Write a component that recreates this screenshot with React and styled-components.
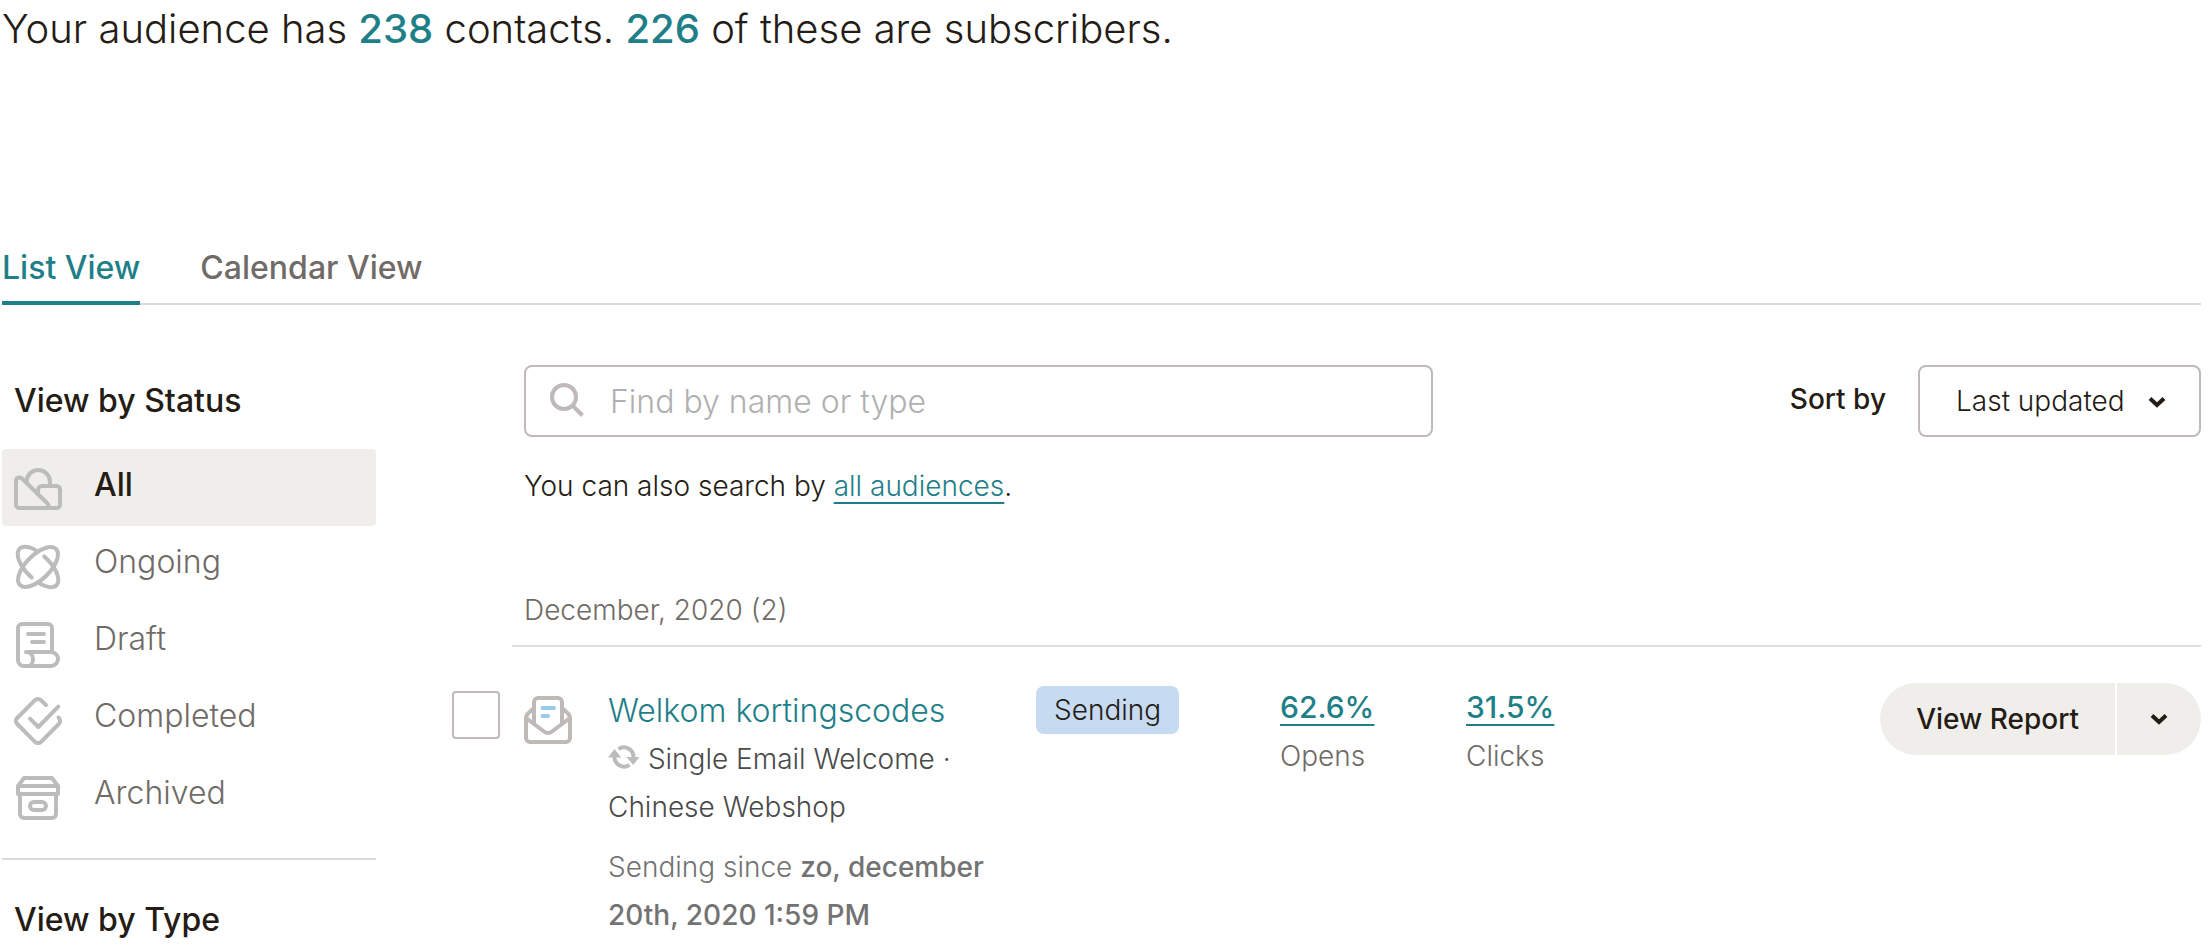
import React from 'react'
import styled, { createGlobalStyle } from 'styled-components'

const statuses = [
  { label: 'All', icon: AllIcon, active: true },
  { label: 'Ongoing', icon: OngoingIcon },
  { label: 'Draft', icon: DraftIcon },
  { label: 'Completed', icon: CompletedIcon },
  { label: 'Archived', icon: ArchivedIcon },
]

const stats = [
  { value: '62.6%', label: 'Opens' },
  { value: '31.5%', label: 'Clicks' },
]

function App() {
  return (
    <Page>
      <GlobalStyle />
      <Summary>
        Your audience has <strong>238</strong> contacts. <strong>226</strong> of
        these are subscribers.
      </Summary>

      <Tabs>
        <Tab href="#list" $active>
          List View
        </Tab>
        <Tab href="#calendar">Calendar View</Tab>
      </Tabs>

      <Columns>
        <Sidebar>
          <SidebarTitle>View by Status</SidebarTitle>
          <StatusList>
            {statuses.map(({ label, icon: StatusIcon, active }) => (
              <li key={label}>
                <StatusLink href={`#${label.toLowerCase()}`} $active={active}>
                  <StatusIcon />
                  {label}
                </StatusLink>
              </li>
            ))}
          </StatusList>
          <Divider />
          <SidebarTitle>View by Type</SidebarTitle>
        </Sidebar>

        <Main>
          <Toolbar>
            <SearchBox>
              <SearchIcon />
              <SearchInput
                type="text"
                aria-label="Find by name or type"
                placeholder="Find by name or type"
              />
            </SearchBox>
            <Sort>
              <SortLabel htmlFor="sort">Sort by</SortLabel>
              <SelectBox>
                <Select id="sort" defaultValue="updated">
                  <option value="updated">Last updated</option>
                  <option value="name">Name</option>
                </Select>
                <Chevron />
              </SelectBox>
            </Sort>
          </Toolbar>
          <Hint>
            You can also search by <a href="#audiences">all audiences</a>.
          </Hint>

          <Month>December, 2020 (2)</Month>
          <Campaign>
            <Checkbox type="checkbox" aria-label="Select Welkom kortingscodes" />
            <MailIcon />
            <Info>
              <CampaignLink href="#campaign">Welkom kortingscodes</CampaignLink>
              <Kind>
                <SyncIcon /> Single Email Welcome · Chinese Webshop
              </Kind>
              <Since>
                Sending since <strong>zo, december 20th, 2020 1:59 PM</strong>
              </Since>
            </Info>
            <div>
              <Badge>Sending</Badge>
            </div>
            {stats.map((stat) => (
              <div key={stat.label}>
                <StatLink href="#report">{stat.value}</StatLink>
                <StatLabel>{stat.label}</StatLabel>
              </div>
            ))}
            <ButtonGroup>
              <ReportButton type="button">View Report</ReportButton>
              <MenuButton type="button" aria-label="More actions">
                <Chevron />
              </MenuButton>
            </ButtonGroup>
          </Campaign>
        </Main>
      </Columns>
    </Page>
  )
}

export default App

function AllIcon() {
  return (
    <Icon viewBox="0 0 48 48">
      <path d="M8 12.5C5.5 10.5 2 11.5 2 15v23.500a3.500 3.500 0 0 0 3.500 3.500h37a3.500 3.500 0 0 0 3.500-3.500v-15a3.500 3.500 0 0 0-3.500-3.500H28a4 4 0 0 0-4 4v4" />
      <path d="M8 12.5l25 24.500c1.500 1.500 2 3 1.500 5" />
      <path d="M12.500 16a11.750 12 0 0 1 23.500 0v4" />
    </Icon>
  )
}

function OngoingIcon() {
  return (
    <Icon viewBox="0 0 48 48">
      <ellipse cx="24" cy="24" rx="25.5" ry="12" transform="rotate(-45 24 24)" />
      <path d="M17.7 34.6A25.500 12 45 0 1 24 8.6" />
      <path d="M30.3 13.4A25.500 12 45 0 1 24 39.4" />
    </Icon>
  )
}

function DraftIcon() {
  return (
    <Icon viewBox="0 0 48 48">
      <path d="M38 31V8a4 4 0 0 0-4-4H8a4 4 0 0 0-4 4v32a6 6 0 0 0 6 6h27a7 7 0 0 0 0-14H12c4 0 7 3 7 7s-2 7-5 7" />
      <path d="M14 14h16M18 22h12" />
    </Icon>
  )
}

function CompletedIcon() {
  return (
    <Icon viewBox="0 0 48 48">
      <path d="M32 8l-5-4.8a4.200 4.200 0 0 0-6 0L3.200 21a4.200 4.200 0 0 0 0 6L21 44.800a4.200 4.200 0 0 0 6 0L44.800 27c1.800-1.800 1.800-4.500-.3-6.500" />
      <path d="M16 21.7l8.300 8.300 20-20.300" />
    </Icon>
  )
}

function ArchivedIcon() {
  return (
    <Icon viewBox="0 0 48 48">
      <path d="M4 12l6-8h28l6 8v8H4zM4 12h40" />
      <path d="M6 20v20a4 4 0 0 0 4 4h28a4 4 0 0 0 4-4V20" />
      <rect x="16" y="28" width="16" height="8" rx="4" />
    </Icon>
  )
}

function SearchIcon() {
  return (
    <SearchGlyph viewBox="0 0 34 34">
      <circle cx="14" cy="14" r="12" />
      <path d="M22.5 22.5l10 10" />
    </SearchGlyph>
  )
}

function MailIcon() {
  return (
    <MailGlyph viewBox="0 0 48 48">
      <path d="M10 27V6a4 4 0 0 1 4-4h20a4 4 0 0 1 4 4v21" />
      <path d="M10 12l-5 4.5a8 8 0 0 0-3 6V42a4 4 0 0 0 4 4h36a4 4 0 0 0 4-4V22.5a8 8 0 0 0-3-6L38 12" />
      <path d="M2 22l18 13.5q4 3 8 0L46 22" />
      <path d="M18.5 12H30M18.5 20H24" stroke="#9acbe8" />
    </MailGlyph>
  )
}

function SyncIcon() {
  return (
    <SyncGlyph viewBox="0 0 32 24">
      <path d="M10.5 4.2A9.500 9.500 0 0 1 25.4 13" />
      <path d="M21.5 19.8A9.500 9.500 0 0 1 6.6 11" />
      <path d="M0 12.5L6.600 4l6.600 8.500zM18.500 12h13L25.200 20z" fill="#bcbcbb" stroke="none" />
    </SyncGlyph>
  )
}

function Chevron() {
  return (
    <ChevronGlyph viewBox="0 0 18 12">
      <path d="M2 2.5l7 6.5 7-6.5" />
    </ChevronGlyph>
  )
}

const GlobalStyle = createGlobalStyle`
  * {
    box-sizing: border-box;
  }

  body {
    margin: 0;
    background: #fff;
    color: #241c15;
    font-family: Inter, 'Liberation Sans', sans-serif;
    font-size: 28px;
    font-weight: 300;
    line-height: 48px;
  }

  input,
  select,
  button {
    color: inherit;
    font: inherit;
  }

  strong {
    font-weight: 500;
  }
`

const Page = styled.div`
  padding: 0 9px 0 2px;
`

const Summary = styled.p`
  margin: 0 0 186px;
  font-size: 40px;
  line-height: 58px;

  strong {
    color: #1f7f89;
  }
`

const Tabs = styled.nav`
  display: flex;
  gap: 60px;
  box-shadow: inset 0 -2px #d9d9d9;
`

const Tab = styled.a`
  padding-bottom: 9px;
  border-bottom: 4px solid ${(props) => (props.$active ? '#1f7f89' : 'transparent')};
  color: ${(props) => (props.$active ? '#1f7f89' : '#716b67')};
  font-size: 32px;
  font-weight: 500;
  text-decoration: none;
`

const Columns = styled.div`
  display: flex;
  gap: 76px;
  padding-top: 60px;
`

const Sidebar = styled.aside`
  flex: none;
  width: 374px;
  padding-top: 12px;
`

const SidebarTitle = styled.h2`
  margin: 0;
  padding-left: 12px;
  font-size: 32px;
  font-weight: 500;
`

const StatusList = styled.ul`
  margin: 24px 0;
  padding: 0;
  list-style: none;
`

const StatusLink = styled.a`
  display: flex;
  gap: 32px;
  padding: 12px;
  border-radius: 4px;
  background: ${(props) => (props.$active ? '#efeeea' : 'transparent')};
  color: ${(props) => (props.$active ? '#241c15' : '#716b67')};
  font-size: 32px;
  font-weight: ${(props) => (props.$active ? 500 : 300)};
  text-decoration: none;
`

const Icon = styled.svg`
  flex: none;
  width: 48px;
  height: 48px;
  margin-top: 5px;
  overflow: visible;
  fill: none;
  stroke: #bcbcbb;
  stroke-width: 4;
  stroke-linecap: round;
  stroke-linejoin: round;
`

const Divider = styled.hr`
  height: 2px;
  margin: 0 0 36px;
  border: 0;
  background: #dbdbdb;
`

const Main = styled.main`
  flex: 1;
  min-width: 0;
`

const Toolbar = styled.div`
  display: flex;
  justify-content: space-between;
  gap: 48px;
  padding-left: 72px;
`

const SearchBox = styled.div`
  position: relative;
  flex: 0 1 909px;
`

const SearchGlyph = styled.svg`
  position: absolute;
  top: 18px;
  left: 26px;
  width: 34px;
  height: 34px;
  fill: none;
  stroke: #bfbab9;
  stroke-width: 4;
`

const SearchInput = styled.input`
  width: 100%;
  height: 72px;
  padding: 0 24px 0 84px;
  border: 2px solid #bfbab9;
  border-radius: 8px;
  background: #fff;
  font-size: 32px;

  &::placeholder {
    color: #b0b0b0;
    opacity: 1;
  }
`

const Sort = styled.div`
  display: flex;
  align-items: center;
  gap: 32px;
`

const SortLabel = styled.label`
  padding-bottom: 4px;
  font-weight: 500;
`

const SelectBox = styled.div`
  position: relative;

  svg {
    position: absolute;
    top: 31px;
    right: 35px;
    pointer-events: none;
  }
`

const Select = styled.select`
  width: 283px;
  height: 72px;
  padding: 0 64px 0 36px;
  border: 2px solid #bfbab9;
  border-radius: 8px;
  background: #fff;
  appearance: none;
`

const ChevronGlyph = styled.svg`
  width: 18px;
  height: 12px;
  fill: none;
  stroke: #241c15;
  stroke-width: 4;
`

const Hint = styled.p`
  margin: 25px 0 76px 72px;

  a {
    color: #1f7f89;
    text-decoration: underline 2px;
    text-underline-offset: 6px;
    text-decoration-skip-ink: none;
  }
`

const Month = styled.h3`
  margin: 0 0 0 60px;
  padding: 0 12px 11px;
  border-bottom: 2px solid #dedede;
  color: #716b67;
  font-size: 28px;
  font-weight: 300;
`

const Campaign = styled.article`
  display: grid;
  grid-template-columns: 72px 84px 428px 244px 186px 1fr auto;
  align-items: start;
  padding-top: 36px;
`

const Checkbox = styled.input`
  width: 48px;
  height: 48px;
  margin: 8px 0 0;
  border: 2px solid #bfbab9;
  border-radius: 4px;
  background: #fff;
  appearance: none;
`

const MailGlyph = styled(Icon)`
  margin-top: 13px;
  stroke: #bfbab7;
`

const Info = styled.div`
  padding: 4px 48px 0 0;
`

const CampaignLink = styled.a`
  display: block;
  color: #1f7f89;
  font-size: 32px;
  text-decoration: none;
`

const Kind = styled.p`
  margin: 0;
  color: #4a4a4a;
`

const SyncGlyph = styled.svg`
  width: 32px;
  height: 24px;
  fill: none;
  stroke: #bcbcbb;
  stroke-width: 4;
`

const Since = styled.p`
  margin: 12px 0 0;
  color: #737373;
`

const Badge = styled.span`
  display: inline-block;
  margin-top: 3px;
  padding: 0 18px;
  border-radius: 8px;
  background: #c6daf2;
`

const StatLink = styled.a`
  color: #1f7f89;
  font-size: 30px;
  font-weight: 500;
  text-decoration: underline 2px;
  text-underline-offset: 6px;
`

const StatLabel = styled.div`
  color: #716b67;
`

const ButtonGroup = styled.div`
  display: flex;
  gap: 2px;
`

const ReportButton = styled.button`
  height: 72px;
  padding: 0 36px;
  border: 0;
  border-radius: 36px 0 0 36px;
  background: #efeeea;
  font-weight: 500;
`

const MenuButton = styled.button`
  display: flex;
  align-items: center;
  justify-content: center;
  width: 84px;
  height: 72px;
  border: 0;
  border-radius: 0 36px 36px 0;
  background: #efeeea;
`
